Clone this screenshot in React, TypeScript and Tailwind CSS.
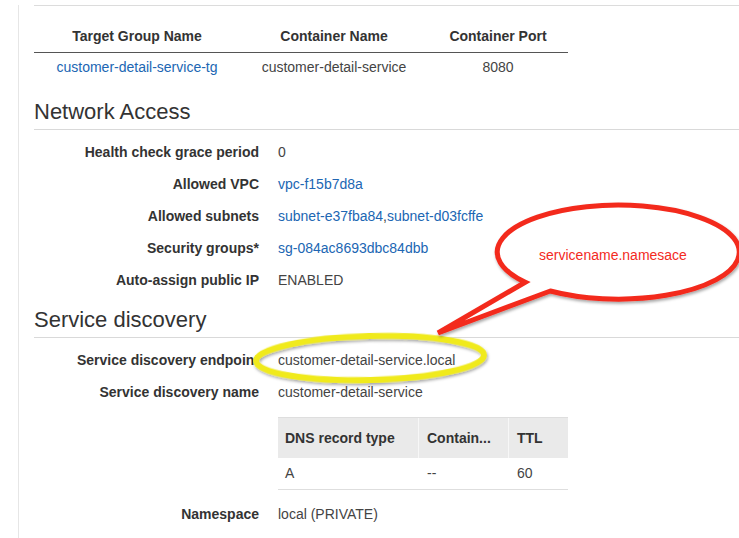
import React from "react";

type Row = { label: string; value: React.ReactNode };

const LINK = "text-[#2066b3]";

const networkRows: Row[] = [
  { label: "Health check grace period", value: "0" },
  { label: "Allowed VPC", value: <span className={LINK}>vpc-f15b7d8a</span> },
  {
    label: "Allowed subnets",
    value: (
      <span className={LINK}>
        subnet-e37fba84<span className="text-[#444]">,</span>subnet-d03fcffe
      </span>
    ),
  },
  { label: "Security groups*", value: <span className={LINK}>sg-084ac8693dbc84dbb</span> },
  { label: "Auto-assign public IP", value: "ENABLED" },
];

const discoveryRows: Row[] = [
  { label: "Service discovery endpoint", value: "customer-detail-service.local" },
  { label: "Service discovery name", value: "customer-detail-service" },
];

function DetailRow({ row }: { row: Row }) {
  return (
    <div className="flex h-[32px] items-center">
      <div className="w-[225px] text-right font-bold text-[#333] whitespace-nowrap">{row.label}</div>
      <div className="ml-[19px] whitespace-nowrap">{row.value}</div>
    </div>
  );
}

function SectionHeading({ title, className }: { title: string; className: string }) {
  return (
    <h2 className={`${className} border-b border-[#d9d9d9] pb-[4px] text-[22px] leading-[26px] text-[#333]`}>
      {title}
    </h2>
  );
}

// hand drawn annotation on top of the page
function Annotation() {
  return (
    <svg className="pointer-events-none absolute left-0 top-0" width="739" height="538" viewBox="0 0 739 538">
      <defs>
        <filter id="shadow" x="-10%" y="-20%" width="120%" height="150%">
          <feDropShadow dx="1" dy="2" stdDeviation="1.5" floodColor="#000" floodOpacity="0.35" />
        </filter>
      </defs>
      <ellipse
        cx="370"
        cy="358"
        rx="114"
        ry="22"
        transform="rotate(-1.5 370 358)"
        fill="none"
        stroke="#f0ea1e"
        strokeWidth="6"
        filter="url(#shadow)"
      />
      <path
        d="M 550.3 291 A 121 47 0 1 0 525.3 282.2 L 438 333 Z"
        fill="#fff"
        stroke="#f32a1e"
        strokeWidth="5"
        strokeLinejoin="miter"
        filter="url(#shadow)"
      />
      <text
        x="613"
        y="260"
        textAnchor="middle"
        fontFamily="'Liberation Sans', Arial, sans-serif"
        fontSize="14"
        fill="#f32a1e"
      >
        servicename.namesace
      </text>
    </svg>
  );
}

export default function App() {
  return (
    <div className="relative h-[538px] w-[739px] overflow-hidden bg-white font-['Liberation_Sans',Arial,sans-serif] text-[14px] text-[#444]">
      <div className="ml-[18px] h-full border-l border-[#e6e6e6] pl-[15px]">
        {/* Target groups */}
        <div className="mt-[5px] border-t border-[#dcdcdc]">
          <div className="w-[534px]">
            <div className="grid grid-cols-[206px_188px_140px] border-b border-[#555] text-center font-bold leading-[18px] text-[#333]">
              <div className="pt-[21px] pb-[7px]">Target Group Name</div>
              <div className="pt-[21px] pb-[7px]">Container Name</div>
              <div className="pt-[21px] pb-[7px]">Container Port</div>
            </div>
            <div className="grid grid-cols-[206px_188px_140px] text-center leading-[18px]">
              <div className={`py-[5px] ${LINK}`}>customer-detail-service-tg</div>
              <div className="py-[5px]">customer-detail-service</div>
              <div className="py-[5px]">8080</div>
            </div>
          </div>
        </div>

        {/* Network access */}
        <SectionHeading title="Network Access" className="mt-[18px]" />
        <div className="pt-[6px]">
          {networkRows.map((r) => (
            <DetailRow key={r.label} row={r} />
          ))}
        </div>

        {/* Service discovery */}
        <SectionHeading title="Service discovery" className="mt-[11px]" />
        <div className="pt-[6px]">
          {discoveryRows.map((r) => (
            <DetailRow key={r.label} row={r} />
          ))}
        </div>

        <div className="ml-[244px] mt-[9px] w-[290px]">
          <div className="grid h-[41px] grid-cols-[140px_90px_60px] border-t border-[#dedede] bg-[#eaeaea] font-bold text-[#333]">
            <div className="flex items-center pl-[7px]">DNS record type</div>
            <div className="flex items-center border-l border-[#f7f7f7] pl-[8px]">Contain...</div>
            <div className="flex items-center border-l border-[#f7f7f7] pl-[8px]">TTL</div>
          </div>
          <div className="grid h-[32px] grid-cols-[140px_90px_60px] border-b border-[#dedede]">
            <div className="flex items-center pl-[7px]">A</div>
            <div className="flex items-center pl-[9px]">--</div>
            <div className="flex items-center pl-[9px]">60</div>
          </div>
        </div>

        <div className="mt-[8px]">
          <DetailRow row={{ label: "Namespace", value: "local (PRIVATE)" }} />
        </div>
      </div>
      <Annotation />
    </div>
  );
}
